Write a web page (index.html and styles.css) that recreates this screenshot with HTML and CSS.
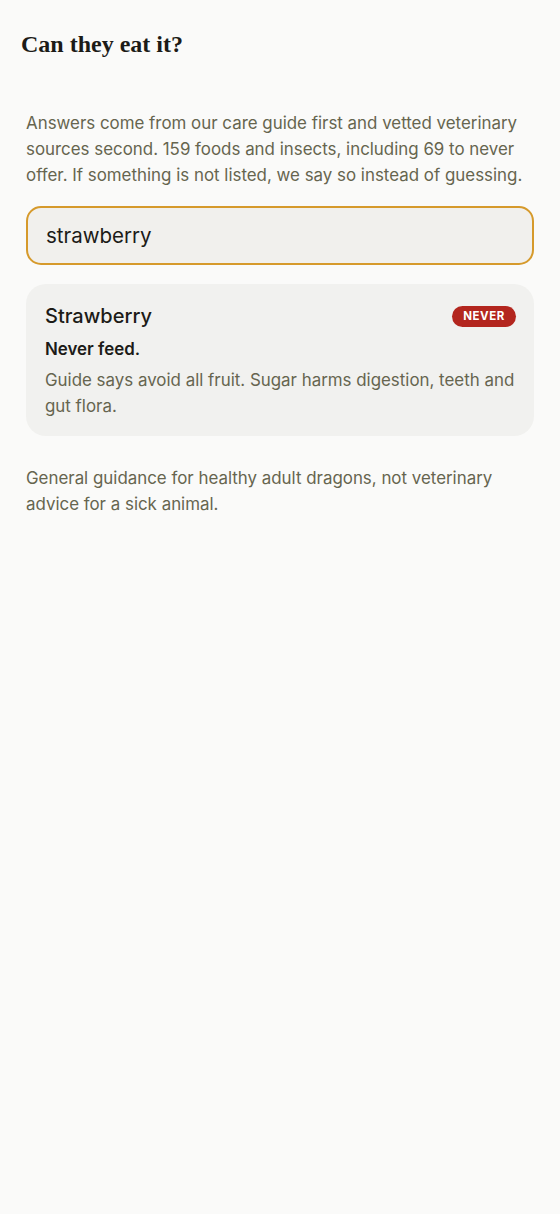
FILE: index.html
```html
<!DOCTYPE html>
<html lang="en">
<head>
    <meta charset="UTF-8">
    <meta name="viewport" content="width=device-width, initial-scale=1.0">
    <title>Can they eat it?</title>
    <link rel="stylesheet" href="styles.css">
</head>
<body>

<header class="top-bar">
    <h1>Can they eat it?</h1>
</header>

<main class="page">
    <p class="intro">Answers come from our care guide first and vetted veterinary sources second. 159 foods and insects, including 69 to never offer. If something is not listed, we say so instead of guessing.</p>

    <input class="search" type="text" value="strawberry" aria-label="Search foods">

    <div class="result">
        <div class="result-head">
            <h2>Strawberry</h2>
            <span class="badge badge-never">NEVER</span>
        </div>
        <p class="verdict">Never feed.</p>
        <p class="reason">Guide says avoid all fruit. Sugar harms digestion, teeth and gut flora.</p>
    </div>

    <p class="note">General guidance for healthy adult dragons, not veterinary advice for a sick animal.</p>
</main>

</body>
</html>
```

FILE: styles.css
```css
body {
    margin: 0;
    background: #fafaf9;
    font-family: Inter, "Noto Sans", sans-serif;
    color: #1c1b17;
}
.top-bar {
    padding: 30px 21px 0;
}
h1 {
    margin: 0;
    font-family: "Liberation Serif", "DejaVu Serif", serif;
    font-size: 24px;
    font-weight: 700;
    line-height: 28px;
    color: #1c1b17;
}
.page {
    padding: 0 26px;
}
.intro {
    margin: 52px 0 0;
    font-size: 16.9px;
    line-height: 26px;
    color: #66654f;
}
.search {
    display: block;
    box-sizing: border-box;
    width: 100%;
    height: 59px;
    margin-top: 18px;
    padding: 0 18px;
    border: 2px solid #d69a2c;
    border-radius: 15px;
    background: #f1f0ed;
    font-family: Inter, "Noto Sans", sans-serif;
    font-size: 20.5px;
    color: #1c1b17;
    outline: none;
}
.result {
    margin-top: 19px;
    padding: 19px 14px 17px 19px;
    background: #f1f1ef;
    border-radius: 20px;
}
.result-head {
    display: flex;
    align-items: center;
    justify-content: space-between;
    padding-right: 4px;
}
.result-head h2 {
    margin: 0;
    font-size: 20px;
    font-weight: 500;
    line-height: 26px;
}
.badge {
    padding: 3px 11px;
    border-radius: 11px;
    font-size: 11.5px;
    font-weight: 700;
    letter-spacing: 0.6px;
    line-height: 15px;
    color: #fff;
}
.badge-never {
    background: #b3261e;
}
.verdict {
    margin: 9px 0 0;
    font-size: 16.9px;
    font-weight: 600;
    line-height: 22px;
}
.reason {
    margin: 7px 0 0;
    font-size: 16.9px;
    line-height: 26px;
    color: #66654f;
}
.note {
    margin: 29px 0 0;
    font-size: 16.9px;
    line-height: 26px;
    color: #66654f;
}
```
